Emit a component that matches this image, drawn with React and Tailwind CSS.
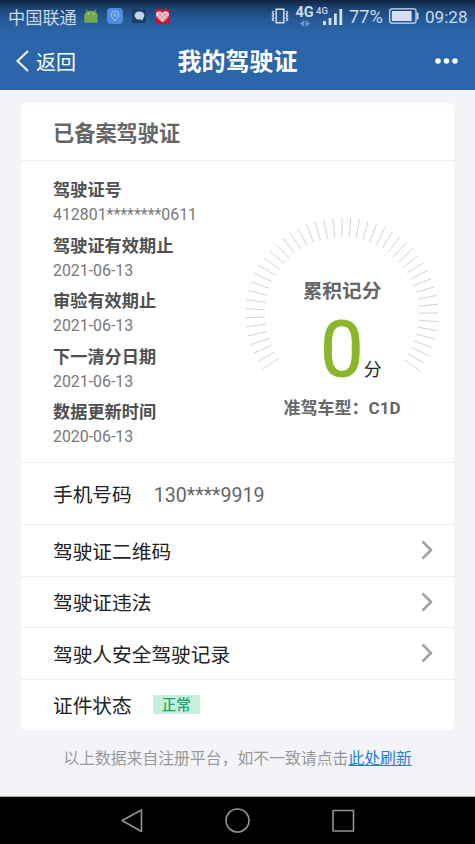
import React from "react";

const FONT = "font-[Roboto,'Noto_Sans_CJK_SC',sans-serif]";

const TICKS = Array.from({ length: 48 }, (_, i) => {
  const left = i < 23;
  const deg = left ? -124.8 + i * (124.8 / 23) : (i - 23) * (126.2 / 24);
  const a = (deg * Math.PI) / 180;
  const s = Math.sin(a);
  const c = Math.cos(a);
  return { x1: 97 + 77 * s, y1: 97 - 77 * c, x2: 97 + 96.3 * s, y2: 97 - 96.3 * c };
});

const FIELDS = [
  ["驾驶证号", "412801********0611"],
  ["驾驶证有效期止", "2021-06-13"],
  ["审验有效期止", "2021-06-13"],
  ["下一清分日期", "2021-06-13"],
  ["数据更新时间", "2020-06-13"],
];

const LINKS = ["驾驶证二维码", "驾驶证违法", "驾驶人安全驾驶记录"];

function AndroidIcon() {
  return (
    <svg className="h-[14px] w-[14px]" viewBox="0 0 14 14">
      <path d="M0.3 6.5C.8 3.600 3 1.800 7 1.800s6.200 1.800 6.700 4.700V13.700H.3Z" fill="#74a84d" />
      <path d="M3.300 2.800 2 .3M10.700 2.800l1.300-2.500" stroke="#74a84d" />
      <circle cx="4.300" cy="4.700" r=".7" fill="#dcecd0" />
      <circle cx="9.700" cy="4.700" r=".7" fill="#dcecd0" />
    </svg>
  );
}

function PinIcon() {
  return (
    <svg className="h-4 w-4" viewBox="0 0 16 16" fill="none">
      <rect width="16" height="16" rx="4" fill="#4f8cdb" />
      <path d="M8 13C5.500 10.200 4.200 8.600 4.200 6.800a3.800 3.800 0 0 1 7.600 0C11.800 8.600 10.500 10.200 8 13Z" stroke="#a9ccf5" strokeWidth=".9" />
      <circle cx="8" cy="6.800" r="1.300" stroke="#a9ccf5" strokeWidth=".8" />
    </svg>
  );
}

function ChatIcon() {
  return (
    <svg className="h-[14px] w-[14px]" viewBox="0 0 14 14">
      <rect width="14" height="14" rx="2" fill="#1d3c60" />
      <ellipse cx="7.500" cy="6.500" rx="4.900" ry="4.100" fill="#c3d3df" />
      <path d="m8 9.500 2.500 2.200.5-3.200Z" fill="#c3d3df" />
    </svg>
  );
}

function HeartIcon() {
  return (
    <svg className="h-[15px] w-[15px]" viewBox="0 0 15 15">
      <rect width="15" height="15" rx="2" fill="#c8152e" />
      <path d="M7.500 13.300C4 10.800 1 8.300 1 5.500c0-3.400 4.800-4.300 6.500-1.400C9.200 1.200 14 2.100 14 5.500c0 2.800-3 5.300-6.500 7.800Z" fill="#f2ccd2" />
      <path d="m3 4 8 7M2 7l5 5M7.500 4l5 4.500M12 4l-8 7M13 7l-5 5M7.500 4 2.500 8.500" stroke="#c8152e" strokeWidth=".35" />
    </svg>
  );
}

function VibrateIcon() {
  return (
    <svg className="h-4 w-[18px]" viewBox="0 0 18 16" fill="none" stroke="#d3e0ef">
      <rect x="5.200" y="1.200" width="7.600" height="13.600" strokeWidth="1.500" />
      <path d="m2.800 3-1.500 1.700 1.500 1.700-1.500 1.700 1.500 1.700-1.500 1.700 1.500 1.500M15.200 3l1.500 1.700-1.500 1.700 1.500 1.700-1.500 1.700 1.500 1.700-1.500 1.500" strokeWidth="1.300" />
    </svg>
  );
}

function SignalIcon() {
  return (
    <svg className="h-4 w-5" viewBox="0 0 20 16" fill="#d3e0ef">
      <rect x="0" y="12" width="3" height="4" />
      <rect x="5.600" y="9" width="2.800" height="7" />
      <rect x="11" y="4.500" width="2.800" height="11.500" />
      <rect x="16.400" y="0" width="2.800" height="16" />
    </svg>
  );
}

function BatteryIcon() {
  return (
    <svg className="h-4 w-[30px]" viewBox="0 0 30 16" fill="none">
      <rect x=".7" y=".9" width="26.300" height="14.200" rx="2" stroke="#d3e0ef" strokeWidth="1.200" />
      <rect x="2.800" y="3" width="19.800" height="10" fill="#d3e0ef" />
      <path d="M28.500 4.500v7" stroke="#d3e0ef" strokeWidth="1.800" />
    </svg>
  );
}

function StatusBar() {
  return (
    <div className="flex h-8 shrink-0 items-center pr-[7px] pl-2 text-[#c9daec]">
      <span className="w-[69px] pt-[3px] text-[17.200px] leading-[30px] whitespace-nowrap">中国联通</span>
      <div className="ml-[7px] flex items-center gap-[9px]">
        <AndroidIcon />
        <PinIcon />
        <ChatIcon />
        <HeartIcon />
      </div>
      <div className="ml-auto flex items-center">
        <VibrateIcon />
        <div className="ml-1.5 flex w-[19px] flex-col items-center">
          <span className="text-[14.500px] leading-[14px] font-bold">4G</span>
          <svg className="h-[7px] w-[10px]" viewBox="0 0 10 7" fill="#6f98c6">
            <path d="M4.300 0v7L0 3.500ZM5.700 0v7L10 3.500Z" />
          </svg>
        </div>
        <div className="relative ml-[9px] mt-px h-4 w-5">
          <SignalIcon />
          <span className="absolute -top-[3px] -left-[7px] text-[9.500px] leading-[9px] font-medium">4G</span>
        </div>
        <span className="ml-[6px] w-[35px] pt-px text-[18.200px] leading-8">77%</span>
        <div className="ml-[5px]"><BatteryIcon /></div>
        <span className="ml-[6px] w-[43px] pt-px text-[17.100px] leading-8">09:28</span>
      </div>
    </div>
  );
}

function Gauge() {
  return (
    <div className="relative mt-[56px] ml-[3px] h-[200px] w-[194px]">
      <svg className="absolute inset-0 h-[194px] w-[194px]" viewBox="0 0 194 194" stroke="#d2d2d2" strokeWidth="1">
        {TICKS.map((t, i) => (
          <line key={i} x1={t.x1} y1={t.y1} x2={t.x2} y2={t.y2} />
        ))}
      </svg>
      <div className="relative flex flex-col items-center pt-[61px]">
        <div className="text-[19.700px] leading-7 font-bold text-[#666]">累积记分</div>
        <div className="mt-[9px] flex h-[70px] items-end pl-[18px]">
          <span className="text-[77px] leading-[70px] text-[#8bb52b] [-webkit-text-stroke:0.8px_#8bb52b]">0</span>
          <span className="mb-[3px] text-[18px] leading-6 text-[#222]">分</span>
        </div>
        <div className="mt-[11px] text-[17px] leading-6 font-bold whitespace-nowrap text-[#666]">准驾车型：C1D</div>
      </div>
    </div>
  );
}

export default function App() {
  return (
    <div className={`${FONT} flex h-[844px] w-[475px] flex-col overflow-hidden bg-[#f3f3f8]`}>
      <header className="flex h-[90px] shrink-0 flex-col border-b border-[#3858a8] bg-[linear-gradient(to_bottom,#10233f_0px,#1d4372_8px,#265a98_20px,#2a66a9_34px)]">
        <StatusBar />
        <div className="grid h-[58px] grid-cols-3 items-center pr-4 pl-4 text-white">
          <div className="flex items-center">
            <svg className="h-6 w-[14px]" viewBox="0 0 14 24" fill="none" stroke="white" strokeWidth="2">
              <path d="M12 2 1.500 12 12 22" />
            </svg>
            <span className="ml-[6px] pt-[4px] text-[20px] leading-7">返回</span>
          </div>
          <h1 className="pt-[3px] text-center text-[24px] leading-8 font-bold whitespace-nowrap">我的驾驶证</h1>
          <svg className="h-6 w-6 justify-self-end" viewBox="0 0 24 24" fill="white">
            <circle cx="3" cy="12" r="2.800" />
            <circle cx="11.500" cy="12" r="2.800" />
            <circle cx="20" cy="12" r="2.800" />
          </svg>
        </div>
      </header>

      <main className="flex grow flex-col border-b border-[#aaa] px-[21px] pt-[13px]">
        <section className="flex h-[627px] flex-col divide-y divide-[#efeff1] rounded-[5px] bg-white">
          <h2 className="h-[58px] shrink-0 pl-8 text-[21.200px] leading-[61px] font-bold text-[#666]">已备案驾驶证</h2>
          <div className="flex h-[302px] shrink-0">
            <dl className="w-[189px] shrink-0 pt-4 pl-8">
              {FIELDS.map(([label, value]) => (
                <div key={label} className="h-[55.500px]">
                  <dt className="h-[26px] text-[17.200px] leading-[26px] font-bold whitespace-nowrap text-[#505050]">{label}</dt>
                  <dd className="h-6 text-[15.900px] leading-6 whitespace-nowrap text-[#777]">{value}</dd>
                </div>
              ))}
            </dl>
            <div className="ml-[32px]"><Gauge /></div>
          </div>
          <div className="flex h-[62px] shrink-0 items-center pt-[4px] pl-8 text-[19.700px]">
            <span className="text-[#222]">手机号码</span>
            <span className="ml-[22px] text-[19.600px] text-[#666]">130****9919</span>
          </div>
          {LINKS.map((label) => (
            <div key={label} className="flex h-[51.500px] shrink-0 items-center justify-between pr-[21px] pl-8 text-[19.700px] text-[#222]">
              <span className="pt-[5px]">{label}</span>
              <svg className="h-5 w-3" viewBox="0 0 12 20" fill="none" stroke="#a2a2a2" strokeWidth="2.500">
                <path d="m1.500 1.500 8.500 8.500-8.500 8.500" />
              </svg>
            </div>
          ))}
          <div className="flex h-[50px] shrink-0 items-center pl-8 text-[19.700px] text-[#222]">
            <span className="pt-[4px]">证件状态</span>
            <span className="ml-[21px] flex h-[19px] w-[47px] items-center justify-center bg-[#c5f0dc] pt-[2px] text-[14.500px] font-medium text-[#24a56b]">正常</span>
          </div>
        </section>
        <p className="mt-[17px] text-center text-[15.850px] leading-6 whitespace-nowrap text-[#999]">
          以上数据来自注册平台，如不一致请点击<a className="text-[#2482d5] underline">此处刷新</a>
        </p>
      </main>

      <nav className="flex h-[47px] shrink-0 items-center justify-center bg-black">
        <svg className="h-[47px] w-[237px]" viewBox="0 0 237 47" fill="none" stroke="#949494" strokeWidth="1.600" strokeLinejoin="round">
          <path d="M22.500 13v21.500L3 23.500Z" />
          <circle cx="118.500" cy="23.500" r="11.500" />
          <rect x="214" y="13.500" width="20.500" height="20.500" />
        </svg>
      </nav>
    </div>
  );
}
